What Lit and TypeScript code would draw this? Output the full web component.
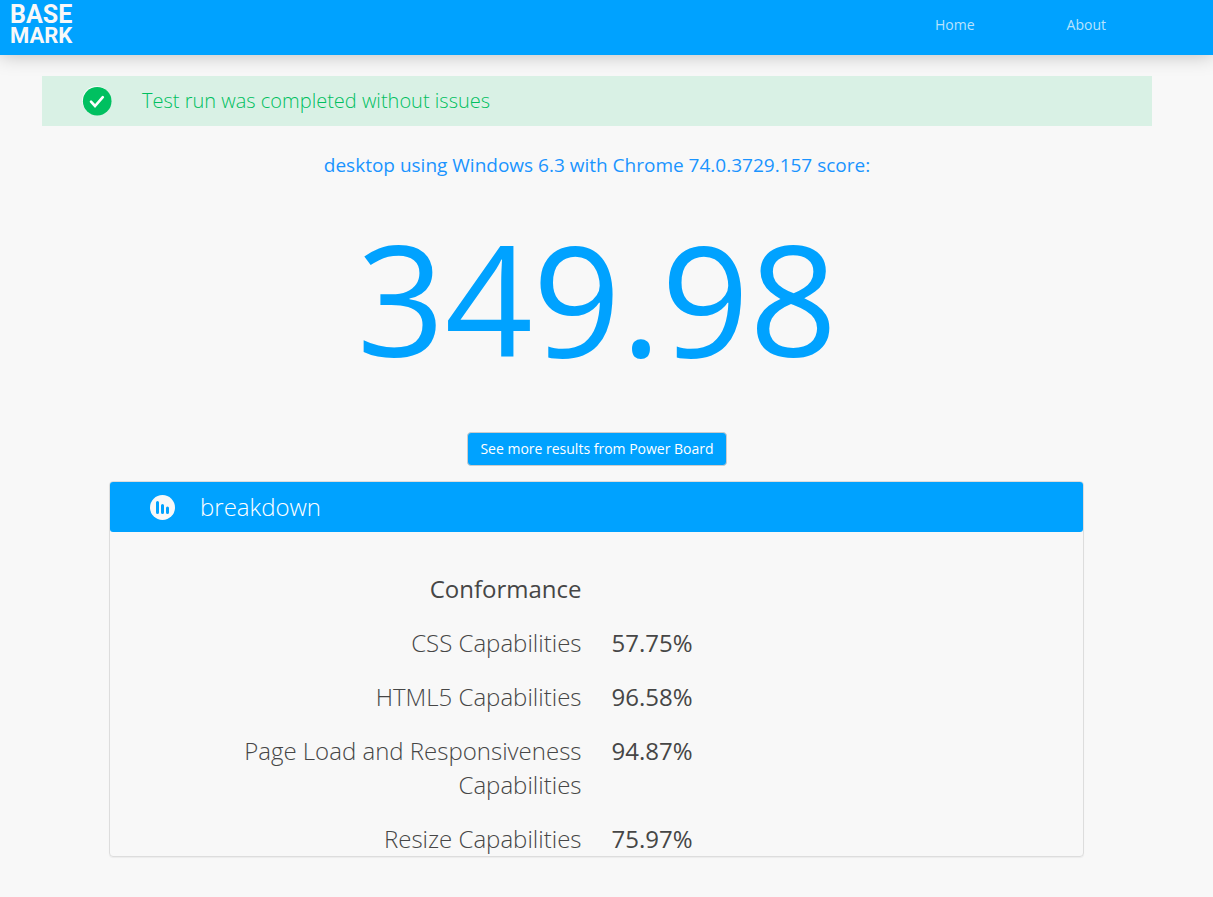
import { LitElement, html, css } from "lit";
import { customElement } from "lit/decorators.js";

const results = [
  { name: "CSS Capabilities", value: "57.75%" },
  { name: "HTML5 Capabilities", value: "96.58%" },
  { name: "Page Load and Responsiveness Capabilities", value: "94.87%" },
  { name: "Resize Capabilities", value: "75.97%" },
];

@customElement("app-root")
export class AppRoot extends LitElement {
  static styles = css`
    :host {
      display: block;
      min-height: 100vh;
      background: #f8f8f8;
      color: #464646;
      font-family: "Open Sans", sans-serif;
      font-size: 14px;
      line-height: 20px;
    }
    * {
      box-sizing: border-box;
    }
    .header {
      display: flex;
      justify-content: space-between;
      height: 55px;
      padding: 0 107px 0 10px;
      background: #00a2ff;
      box-shadow: 0 0 20px rgba(0, 0, 0, 0.25);
    }
    .logo {
      display: flex;
      flex-direction: column;
      padding-top: 4px;
      color: #f8f8f8;
      font-family: Roboto, sans-serif;
      font-weight: 700;
      line-height: 21px;
      text-decoration: none;
    }
    .logo-top {
      font-size: 25px;
    }
    .logo-bottom {
      font-size: 22px;
    }
    .nav {
      display: flex;
      gap: 92px;
      padding-top: 15px;
    }
    .nav a {
      color: #b8e3fd;
      text-decoration: none;
    }
    .main {
      padding: 21px 61px 40px 42px;
    }
    .alert {
      display: flex;
      align-items: center;
      gap: 30px;
      height: 50px;
      padding-left: 40px;
      background: #d9f1e5;
      color: #00bf5f;
      font-size: 20px;
      font-weight: 300;
    }
    .alert svg {
      width: 30px;
      height: 30px;
    }
    .summary {
      display: flex;
      flex-direction: column;
      align-items: center;
    }
    .device {
      margin: 25px 0 0;
      color: #1a94ff;
      font-size: 19px;
      font-weight: 400;
      line-height: 28px;
    }
    .score {
      margin: 8px 0 25px;
      color: #00a2ff;
      font-size: 154px;
      line-height: 220px;
    }
    .more {
      height: 34px;
      padding: 0 12px;
      border: 1px solid #ccc;
      border-radius: 4px;
      background: #00a2ff;
      color: #fff;
      font: inherit;
    }
    .panel {
      margin: 15px 68px 0 67px;
      border: 1px solid #ddd;
      border-radius: 4px;
      box-shadow: 0 1px 1px rgba(0, 0, 0, 0.05);
    }
    .panel-head {
      display: flex;
      align-items: center;
      gap: 25px;
      height: 50px;
      padding-left: 40px;
      border-radius: 3px;
      background: #00a2ff;
      color: #fff;
    }
    .panel-head svg {
      width: 25px;
      height: 25px;
    }
    .panel-head h2 {
      margin: 0;
      font-size: 24px;
      font-weight: 300;
      line-height: 34px;
    }
    .results {
      width: 100%;
      margin-top: 40px;
      table-layout: fixed;
      border-collapse: collapse;
      font-size: 24px;
      line-height: 34px;
    }
    .results th,
    .results td {
      width: 50%;
      padding: 20px 15px 0;
      vertical-align: top;
      text-align: left;
    }
    .results th {
      padding-left: 96px;
      text-align: right;
      font-weight: 300;
    }
    .results thead th {
      padding-top: 0;
      font-weight: 400;
    }
    .results thead td {
      padding-top: 0;
    }
  `;

  render() {
    return html`
      <header class="header">
        <a class="logo" href="#">
          <span class="logo-top">BASE</span>
          <span class="logo-bottom">MARK</span>
        </a>
        <nav class="nav">
          <a href="#">Home</a>
          <a href="#">About</a>
        </nav>
      </header>
      <main class="main">
        <div class="alert" role="status">
          <svg viewBox="0 0 30 30" aria-hidden="true">
            <circle cx="14.5" cy="14.5" r="14.3" fill="#fff" />
            <circle cx="15.2" cy="15.2" r="14.3" fill="#00c060" />
            <path
              d="M9 15.7l4 4.3 7.8-8.8"
              fill="none"
              stroke="#fff"
              stroke-width="2.6"
              stroke-linecap="round"
              stroke-linejoin="miter"
            />
          </svg>
          <span>Test run was completed without issues</span>
        </div>
        <section class="summary">
          <h1 class="device">
            desktop using Windows 6.3 with Chrome 74.0.3729.157 score:
          </h1>
          <div class="score">349.98</div>
          <button class="more" type="button">
            See more results from Power Board
          </button>
        </section>
        <section class="panel">
          <div class="panel-head">
            <svg viewBox="0 0 25 25" aria-hidden="true">
              <circle cx="12.5" cy="12.5" r="12.5" fill="#f8f8f8" />
              <path
                d="M7.5 7.500v10M12.500 10.500v7M17.500 13v4.500"
                fill="none"
                stroke="#00a2ff"
                stroke-width="3"
                stroke-linecap="round"
              />
            </svg>
            <h2>breakdown</h2>
          </div>
          <table class="results">
            <thead>
              <tr>
                <th scope="col">Conformance</th>
                <td></td>
              </tr>
            </thead>
            <tbody>
              ${results.map(
                (r) => html`
                  <tr>
                    <th scope="row">${r.name}</th>
                    <td>${r.value}</td>
                  </tr>
                `
              )}
            </tbody>
          </table>
        </section>
      </main>
    `;
  }
}
